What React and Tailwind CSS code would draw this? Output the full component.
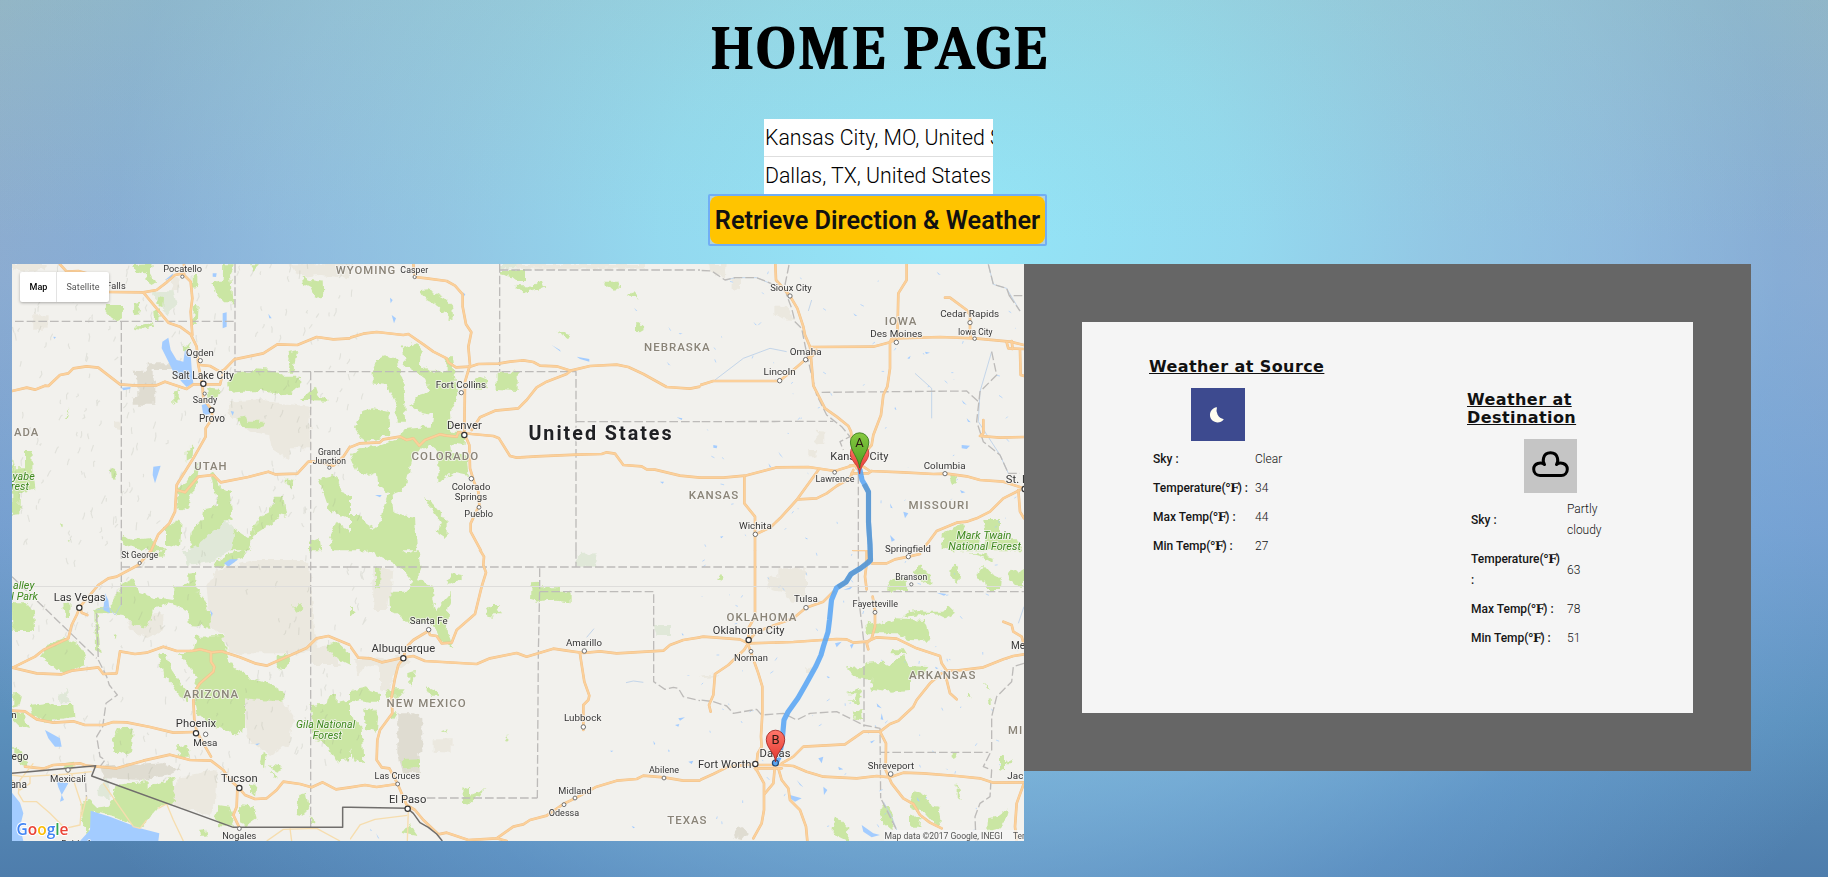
import React from "react";

// Each tile lists its features on a 3x grid that starts at (ox, oy) on the page.
const TILES = [
  {
    ox: 0, oy: 255,
    beige: ["97 178 143 178 143 224 97 224", "685 440 790 432 810 440 932 455 932 580 870 580 868 612 820 590 810 540 750 530 690 480", "870 28 1050 28 1050 70 960 60 910 65 885 50", "345 500 362 500 362 525 345 522", "512 70 535 70 540 110 515 105", "36 27 140 27 140 42 80 50 36 45"],
    tan: ["400 347 443 347 443 325 515 325 515 345 458 345 458 375 466 375 466 449 398 449 398 428 412 425 412 375"],
    pale: ["565 899 580 865 680 795 700 820 705 845 690 899", "450 110 520 105 530 150 500 180 480 150"],
    green: ["400 30 455 28 452 50 468 80 455 90 440 80 437 55 405 48", "318 150 368 150 369 190 352 199 335 188 317 170", "400 150 422 146 415 175 398 178", "402 212 455 205 460 215 420 224 403 222", "460 165 480 160 478 195 462 195", "478 125 492 130 490 155 475 150", "578 65 592 60 592 95 578 98", "583 145 593 150 590 210 578 210", "670 28 705 28 690 60 698 145 672 145 650 120 640 82 668 75", "905 65 930 75 968 80 970 122 945 125 935 100 908 85", "750 28 780 28 762 45", "685 375 695 355 720 350 750 350 770 340 830 347 850 365 900 365 902 395 860 420 780 408 700 412 685 400", "868 290 892 285 885 320 880 350 865 350 872 310", "900 435 945 395 955 425 988 430 985 437 905 435", "520 410 537 405 535 450 520 440", "620 400 660 405 655 430 630 425", "548 270 575 268 570 290 550 285", "712 490 735 485 740 500 795 500 790 518 720 515", "192 488 208 458 200 490", "75 585 98 585 97 655 103 700 60 715 58 778 37 780 37 600 45 640 75 640", "332 640 345 645 350 672 335 665", "560 590 580 567 578 610 560 620", "595 620 560 680 530 700 540 770 565 760 570 720 590 700 595 650", "630 655 650 660 660 700 690 715 695 760 698 800 680 795 600 865 570 880 575 830 605 795 610 760 655 750 640 690", "700 820 745 850 775 790 760 840 745 899 690 899 705 845", "805 775 825 725 850 725 860 785 835 780 825 800 760 840 775 790", "495 820 530 800 545 800 540 880 495 870", "365 842 400 855 440 850 490 880 495 899 370 870", "860 670 880 675 875 700 860 690", "955 670 1000 660 1025 685 1020 710 1050 720 1050 790 990 770", "990 850 1010 800 1050 830 1050 899 1000 899", "930 860 960 850 965 899 930 899", "175 805 188 808 188 820", "200 860 212 850 210 865"],
    water: ["487 260 505 248 512 285 530 315 550 320 555 285 572 300 575 340 580 385 560 396 545 380 520 350 500 310 485 280", "605 450 625 445 630 478 610 480", "668 175 680 172 680 215 668 220", "460 635 482 632 465 685 458 660", "365 398 392 396 390 402 370 406", "638 55 650 55 648 66 638 65", "692 468 702 470 698 482", "495 75 520 55 515 68", "805 176 815 190 808 190", "160 245 168 246 163 252"],
    roads: ["36 408 80 398 105 404 135 392 145 393 180 360 205 355 220 340 260 334 295 338 360 388 400 391 470 391 495 380 560 402 580 388 660 388", "180 28 200 50 235 48 260 55", "325 111 430 112 470 105 500 82 525 60 548 55", "552 28 552 60 572 80 577 130 572 170 577 240", "430 112 505 203 540 215 572 238 590 275 595 330 607 390 610 430 635 465 637 490 617 520 617 545 600 575 580 610 530 690 525 770 508 805 475 838 450 895", "530 705 555 712 595 665 640 660 662 682 745 666 805 650 825 658 892 656 925 620 960 620", "960 622 1000 632 1030 605 1050 575", "600 330 630 333 660 350 672 345 703 313 790 295 832 268 892 270 950 246 1000 253 1050 250", "660 388 672 345"],
    borders: ["45 199 705 199", "705 27 705 350 1050 350", "364 199 364 900", "932 350 932 900"],
    dots: [[547, 65, 1], [601, 317, 2], [610, 386, 3], [614, 416, 1], [635, 466, 2.6], [988, 638, 1]],
  },
  {
    ox: 350, oy: 255,
    beige: ["500 27 885 27 885 41 500 41"],
    tan: [], pale: ["450 27 500 27 500 40 450 40"],
    green: ["450 45 525 45 525 78 495 78 480 65 450 58", "495 92 550 95 575 75 582 95 560 105 515 115", "763 80 808 80 810 95 795 104 765 92", "827 120 850 112 868 130 840 128", "622 230 662 240 655 252", "852 205 870 205 886 222 870 232 852 230", "440 350 503 350 503 408 440 405", "212 105 235 103 285 130 310 155 312 190 300 195 265 155 225 128", "365 375 390 365 415 375 413 403 370 400", "158 275 200 262 215 285 213 330 240 350 290 350 290 330 280 315 305 305 308 325 325 420 315 445 300 470 303 530 345 530 340 570 300 565 303 590 350 600 355 660 310 650 265 680 265 590 240 570 190 600 170 680 150 710 125 720 130 770 160 780 195 785 200 870 195 900 0 900 0 780 30 780 40 800 70 820 95 800 100 760 115 715 85 690 80 650 55 660 20 650 0 600 30 580 80 575 150 550 160 520 205 515 245 515 250 480 215 475 180 450 210 420 240 410 225 370 190 345 165 330", "65 355 85 310 110 302 145 320 150 350 160 365 165 500 140 500 140 450 120 410 110 390 65 385", "35 470 70 460 115 470 118 540 40 560 15 520", "225 730 240 735 290 800 290 850 260 830 270 800"],
    water: ["120 128 128 135 122 145", "125 180 138 190 132 205", "680 305 718 312 718 320 690 312", "605 270 630 285 632 290", "980 487 997 490 995 495", "75 720 95 720 90 727", "930 680 942 680 938 686", "950 320 962 332 955 328", "852 158 862 168 858 167", "955 215 964 228 960 226", "986 234 998 236 990 238", "338 112 346 118 342 124"],
    roads: ["190 28 195 66 230 70 290 78 315 92 338 118 338 155 348 208 364 232 355 275 360 330 345 380 343 530", "0 248 40 236 80 231 160 240 175 237 220 268 250 290 290 310 295 322 318 337 360 335 385 327 445 326 480 320 520 316 550 321 570 332 620 334 662 347 720 333 800 329 835 336 880 357 950 396 1020 401 1050 395", "662 347 650 357 590 380 560 397 530 435 505 460 435 467 390 487 365 525", "0 577 30 565 90 562 100 553 150 545 170 555 190 550 208 572 225 555 270 538 290 542 320 545 325 532 365 537 430 543 447 550 480 603 500 608 560 604 680 599 755 597 770 592 795 596 820 630 875 634 890 643 915 644 990 662 1050 668", "345 540 358 570 360 640 372 680 385 710 388 750 362 805 362 830 400 900"],
    borders: ["449 27 449 350", "449 45 1050 45", "0 350 678 350 678 900", "678 500 1050 500"],
    dots: [[194, 66, 1], [334, 413, 2], [343, 540, 3], [364, 671, 2.2], [387, 757, 1.5]],
  },
  {
    ox: 690, oy: 255,
    beige: ["55 27 107 27 105 65 85 62 60 45", "125 70 150 70 150 105 125 103", "253 155 290 155 315 195 285 193 253 175", "380 527 403 530 403 568 380 568", "355 585 377 585 377 607 355 607"],
    tan: [], pale: [],
    green: ["778 660 800 668 797 680 785 688", "755 860 760 835 790 820 820 805 825 830 870 850 865 880 880 900 790 900 780 880 755 880", "883 795 930 795 930 830 955 850 980 850 995 880 990 900 870 900 890 840"],
    water: ["70 570 82 572 80 580 70 578", "815 570 840 572 830 582 815 580", "600 745 608 760 602 758", "640 770 655 775 645 790", "600 840 615 855 605 860", "265 590 280 610 270 600", "705 290 720 293 708 297", "652 310 662 302 658 312", "740 50 752 60 745 58", "235 625 243 635 240 638", "490 175 502 183 495 182", "190 200 202 212 195 208", "815 435 830 450 820 445", "830 490 842 502 834 500", "810 705 826 712 815 715", "345 847 355 853 348 852", "615 455 620 465 614 462", "90 845 100 843 95 850"],
    roads: ["256 28 258 75 300 123 322 160 340 215 345 240 360 275 365 330 370 392 405 460 440 485 475 513 483 530 490 600 500 640", "360 276 550 275 600 262 620 250 750 246 855 250 960 260 1002 270", "650 28 650 75 625 115 622 250 605 250 600 262 600 340 592 395 580 420 573 480 550 540 545 570 510 610", "0 400 70 378 268 378 310 345 345 315 370 300 380 285", "765 128 780 128 830 165 840 180 840 225 842 248", "0 668 100 668 165 662 260 637 355 636 435 648 500 628", "163 665 163 745 195 785 195 900", "385 645 320 735 270 790 240 818 197 838", "325 733 380 730 410 715 440 693 480 670 490 645", "480 632 520 635 540 648 640 652 730 657 770 656 830 664 870 675 940 680 1002 700", "545 648 535 655 485 655", "990 705 940 730 900 770 860 790 830 800 800 803 740 828 715 862 690 890 650 900", "880 495 880 535 870 543 930 548 1002 546", "950 262 955 280 1002 282", "965 258 968 282", "990 285 992 360 1002 363", "985 705 990 770 1002 790"],
    borders: ["0 45 65 48 105 75 135 68 200 68 255 90", "297 30 285 90 290 120 305 160 315 200 335 220 345 270 360 340 380 420 410 480 455 515 480 545 450 560 460 585", "395 412 830 408 865 440", "0 500 430 499", "505 660 505 900", "895 28 910 88 950 100 958 122 1002 122", "958 122 990 168", "905 290 920 360 870 410 860 500 880 560 930 600 955 655 990 655"],
    rivers: ["895 28 910 88 950 100 990 168", "110 75 135 68 200 68 240 85", "905 290 870 410 865 500 930 600 955 655", "675 355 725 400 725 490", "75 375 160 310 240 280 290 290", "365 135 355 168"],
    dots: [[300, 123, 2], [347, 314, 2.2], [269, 377, 2.2], [619, 262, 2.2], [840, 203, 2], [854, 251, 1.3], [434, 652, 1.5], [765, 656, 2], [196, 838, 2.2], [1004, 702, 3]],
  },
  {
    ox: 0, oy: 550,
    beige: ["620 110 650 60 760 30 910 30 932 50 932 100 950 290 900 310 685 310 670 258 630 230", "735 435 850 455 880 500 870 580 810 615 740 570 735 500", "540 680 650 660 645 760 630 800 520 765 515 720", "370 190 490 190 490 240 440 265 395 240", "930 290 1000 290 1020 345 935 345"],
    tan: ["300 650 490 640 540 660 510 675 430 690 310 685"],
    pale: ["175 440 200 415 210 460 180 460", "550 0 690 0 640 35 560 45", "290 720 320 680 330 745 290 740"],
    green: ["36 160 80 160 103 190 105 243 37 243", "365 105 400 85 415 125 460 140 520 150 520 110 565 100 565 68 588 65 590 120 615 150 630 200 628 230 570 225 565 180 510 160 460 175 445 230 400 225 370 195 330 190 290 190 302 310 285 300 283 180 330 170", "120 320 150 282 190 265 240 285 260 345 180 370 160 350", "478 315 500 315 515 360 570 440 565 455 540 440 515 400 490 375", "540 310 580 300 590 260 670 258 680 320 700 350 750 385 815 402 850 425 850 455 780 450 735 445 735 535 710 555 625 520 590 490 580 440 590 380", "340 565 355 535 397 533 397 605 380 615 343 605", "90 465 150 458 165 465 220 465 223 500 130 515 95 490", "40 425 65 435 60 465 40 470", "40 485 70 490 90 540 60 530 40 510", "830 320 868 312 870 340 850 360 830 350", "876 170 905 160 910 175 893 188", "935 465 980 460 985 435 1010 435 1010 460 1050 450 1050 630 1005 635 985 590 955 575 935 545", "640 40 690 10 745 0 730 20 680 45 645 55", "980 285 1010 275 1050 310 1050 345 1000 320", "525 590 560 585 570 620 540 620", "655 765 690 770 705 830 655 825 645 800", "720 765 760 770 770 805 740 825 720 815", "785 605 800 615 795 655 780 640", "800 645 850 655 835 665", "810 660 835 680 825 688", "895 735 918 728 925 770 910 800 890 795", "750 700 770 705 765 740 750 725", "240 755 270 750 295 775 330 770 350 705 440 690 440 715 520 680 525 755 475 770 440 815 420 835 340 800 280 785 265 860 250 820", "340 255 350 252 348 268", "598 840 615 838 620 860 600 860", "190 165 212 160 210 200 195 205", "480 5 495 0 490 20 460 20", "930 800 940 800 943 822 930 822", "40 590 65 600 85 650 60 640 40 620", "190 640 222 635 220 655 195 655"],
    water: ["36 728 60 758 70 790 60 830 70 873 36 873", "272 782 330 800 420 835 478 850 475 873 240 873 270 840", "135 540 180 565 185 590 165 590 145 565", "170 692 205 700 185 735 180 755 192 750 175 712", "672 40 690 28 715 28 685 50", "630 180 638 190 635 200", "765 582 780 580 772 586", "315 130 325 150 330 190 310 180"],
    roads: ["455 0 415 45 350 80 325 85 295 105 270 135 240 170 230 195 215 225 205 265 130 300 105 320 40 352", "240 170 245 188 262 195", "36 353 110 370 185 373 215 362 295 352 310 372 350 370 360 304 405 312 440 308 490 290 530 303 575 303 600 298 635 307 665 304 720 322 765 340 800 347 920 294 950 265 985 258 1050 285", "633 308 633 335 643 350 640 365 600 400 587 420 580 450 583 510 590 545 610 580 633 620", "36 482 75 484 110 508 160 518 220 514 255 525 310 525 340 516 380 517 450 531 520 548 585 546", "75 650 130 656 160 645 240 640 260 647 350 655 430 632 510 614 570 630 633 632 670 660 690 690 718 715 735 735 765 747 800 745 830 720 850 695 900 702 935 712 968 697 1008 718 1050 712", "712 720 710 770 700 795 718 833"],
    thin: ["36 675 70 680 210 672 275 665", "100 640 60 690 55 730 70 755 110 755 150 790 195 835 240 825 245 765 230 720 215 672", "200 672 230 640", "475 775 500 762 520 810 550 873", "36 690 60 720 90 700 90 680", "800 873 850 838 950 835 1020 873", "870 835 875 873", "260 740 245 800", "440 810 420 835 400 830 310 700"],
    borders: ["364 0 364 165", "364 51 1050 51", "932 0 932 832", "36 80 290 325", "290 190 295 330 320 380 328 405 352 435 318 460 308 530 290 560 300 620 315 630 300 650", "255 665 260 750"],
    country: ["36 670 287 647 275 678 700 832 1028 832 1028 772 1050 772"],
    rivers: ["290 180 325 170 345 195 362 165"],
    dots: [[419, 39, 1], [238, 173, 3], [588, 550, 3], [617, 553, 2.2], [718, 714, 3], [204, 660, 2.2], [718, 836, 1.5]],
  },
  {
    ox: 350, oy: 550,
    beige: ["70 50 130 60 125 120 145 140 115 145 110 180 70 180", "40 320 110 330 160 315 180 330 140 360 110 430 90 420 90 350 50 345 25 380 15 330", "248 568 305 568 305 608 248 605"],
    tan: ["142 490 195 490 217 505 217 605 205 610 210 670 160 670 142 610"],
    pale: ["680 12 740 10 735 50 680 50", "910 225 960 225 960 255 920 255"],
    green: ["50 0 155 0 170 10 205 0 215 50 200 90 250 105 250 150 260 190 250 215 170 215 140 190 120 185 118 125 175 125 190 95 160 60 110 30", "75 50 92 55 90 118 75 115", "290 95 310 70 335 75 335 90 290 105", "265 170 305 125 305 150 295 180 290 240 300 265 310 295 270 270 255 230 240 225", "410 180 425 165 450 165 440 180 455 190 430 190 430 203 412 200", "178 365 195 360 185 410 178 400", "105 418 167 418 150 440 110 440", "228 412 260 420 270 440 245 440", "0 420 40 412 90 430 90 455 60 455 30 450 0 460", "40 480 70 475 85 500 80 545 45 535", "0 500 35 530 40 640 10 630 0 600", "545 100 567 98 570 112 630 112 630 125 662 125 662 157 590 150 560 155 543 150", "158 630 210 628 210 650 160 655", "340 712 357 718 362 735 410 716 380 740 350 765 342 755", "160 835 180 825 203 858 155 850", "275 543 290 538 285 548", "462 570 472 555 472 573", "120 490 140 490 128 510", "0 170 18 190 0 195"],
    water: ["985 505 1005 502 990 512", "1015 635 1030 632 1025 642", "845 828 855 832 850 835", "780 602 790 602 785 606", "975 525 988 522 985 530", "910 572 916 582 912 584", "955 598 960 604 955 605", "1010 375 1020 378 1015 378", "78 850 88 866 84 864", "60 836 66 842 62 842", "995 248 1002 256 997 256"],
    roads: ["390 0 402 20 400 45 408 68 395 110 375 192 320 240 305 278 275 280 260 258 240 255 235 243 190 270 170 290 160 323", "0 288 25 323 60 325 95 337 160 323 190 318 225 333 380 342 420 325 500 309 530 320 565 310 610 296 650 302 700 309 750 304 800 310 940 302 960 285 1000 270 1050 262", "690 310 692 325 703 395 718 437 715 450 700 465 700 540", "160 325 145 345 135 385 125 440 127 490 90 540 82 570 80 630 95 652 118 655 142 700 170 765 195 780 220 810 265 853 290 848 355 870 440 865 490 830 520 823 540 810 590 797 640 762 675 745 740 710 800 692 860 687 880 677 942 682 1000 692 1050 692", "0 712 45 705 80 711 142 702", "440 865 470 873"],
    thin: ["0 868 30 825 75 808 172 796", "175 780 172 873"],
    borders: ["0 51 1050 51", "678 0 678 51", "569 55 569 115 565 310 562 744", "230 744 562 744", "569 125 911 125 911 395 945 418 970 412 985 415 1000 440 1050 452"],
    country: ["0 772 172 775 190 790 210 818 235 832 260 852 277 873"],
    dots: [[236, 239, 2.2], [160, 325, 3], [703, 303, 2.2], [700, 531, 2.2], [143, 702, 1.6], [173, 776, 3], [942, 684, 1.6], [675, 744, 1.6], [642, 764, 1.6]],
    rivers: ["828 398 850 393 880 397", "710 262 732 236"],
  },
  {
    ox: 690, oy: 550,
    beige: ["233 80 265 80 265 55 348 55 348 155 305 155 285 130 233 112", "345 355 375 355 370 368 345 365", "35 380 80 372 85 382 35 384"],
    tan: ["130 850 150 825 165 835 170 850 155 867 135 862"], pale: [],
    green: ["85 85 95 72 98 90 90 95", "585 125 605 90 650 85 652 125", "670 65 690 40 705 70 725 75 720 105 680 85", "780 88 782 60 795 42 808 62 805 95", "860 75 880 45 902 70 932 85 930 120 890 120 885 95 860 88", "955 65 975 60 985 70 1002 60 1002 108 975 105 960 90", "530 215 560 225 620 205 705 210 720 260 715 272 660 270 620 250 530 250", "605 298 640 298 648 312 605 313", "468 355 525 350 530 338 580 335 600 345 640 315 655 345 715 348 700 370 660 385 660 420 600 425 540 415 550 390 500 385", "640 195 680 180 700 185 760 185 770 165 795 190 770 205 740 190 690 195 645 200", "470 430 505 415 515 440 500 460 472 452 495 450 500 430", "485 485 515 480 520 510 490 505", "570 785 580 755 605 790 608 840 575 815", "425 835 432 800 450 808 475 835 472 873 425 850", "660 755 672 720 700 730 720 765 745 770 755 830 730 820 700 785 665 775", "785 610 800 612 795 630 785 625", "930 620 945 615 945 665 930 660", "890 850 895 805 920 800 955 775 945 810 930 835 900 842", "800 700 815 750 800 740", "940 640 970 625 965 640", "895 450 905 440 905 465 895 465", "835 425 845 445 832 440", "885 395 905 420 890 415", "660 800 695 798 690 830 660 830", "840 10 870 10 905 20 905 35 880 22"],
    water: ["515 825 550 850 570 855 545 862 520 845", "400 710 412 720 402 735", "320 690 340 712 330 705", "385 625 400 620 395 640", "540 575 555 570 545 580", "435 280 455 275 440 292", "480 285 492 280 485 296", "575 490 580 510 572 508", "445 650 460 658 447 660", "740 128 770 132 762 137", "560 460 575 475 562 470", "300 735 335 745 315 755 300 745", "410 378 420 382 414 385", "680 740 690 755 683 752", "735 350 745 355 738 357", "460 120 490 108 480 118"],
    roads: ["195 0 195 200 175 235 175 280 162 300 115 345 75 372 70 435 57 465 62 485", "0 267 40 260 150 268 175 280 310 276 440 267 470 268 490 278 530 275 560 262 620 266 680 295 750 318 755 340 770 362 800 362 880 352 940 328 970 318 1002 313", "430 125 400 155 348 173 310 205 200 245 178 270", "175 285 205 370 217 410 217 490 213 560 215 590 203 610 198 660", "490 0 530 0 530 40 525 80 530 118", "545 40 590 40 615 28 655 20 690 12", "548 140 555 180 555 230 545 265 530 280 535 298", "755 370 720 400 680 450 670 470 625 512 600 522 570 545 520 545 465 583 340 590 310 620 275 640", "765 370 780 430 800 448", "570 545 588 580 587 660 605 700 640 745 670 762 690 795 720 818 755 835", "0 692 30 690 70 672 115 650 195 642", "197 645 275 645 310 648 350 665 400 680 500 685 560 678 600 682 640 668 700 670 800 678 870 685 910 698 1002 697", "275 655 195 655", "200 660 222 700 222 780 215 820 190 865", "255 645 250 700 225 730", "265 655 275 690 295 715 300 750 330 780 348 830 352 873", "940 215 965 225 970 245 995 260 1002 285", "1000 705 980 760 975 830 980 873"],
    borders: ["0 51 475 51", "505 0 505 135 522 280 522 530", "505 125 1002 125", "0 447 30 450 70 455 110 468 130 490 200 478 215 495 280 490 320 510 360 490 440 485 520 525 570 535 572 745", "572 607 895 607", "1002 340 970 350 965 395 920 440 905 500 905 600 880 650 905 660 900 740 870 760 855 800 858 873", "575 750 600 800 620 840"],
    rivers: ["580 755 605 800 620 840", "1002 170 985 220"],
    dots: [[655, 20, 2], [664, 103, 1], [348, 173, 2.2], [555, 187, 1.6], [176, 270, 3], [183, 304, 1.6], [196, 642, 3], [602, 672, 2.4]],
  },
];

// [tile, x, baseline y, text, size, kind]; x is the middle of the text
const LABELS = [
  [0, 548, 52, "Pocatello", 9.2, "c"], [0, 348, 102, "Falls", 9.2, "c"],
  [0, 600, 303, "Ogden", 9.5, "c"], [0, 609, 371, "Salt Lake City", 10.2, "c"], [0, 615, 444, "Sandy", 8.9, "c"], [0, 636, 500, "Provo", 10, "c"],
  [0, 988, 600, "Grand", 8.5, "c"], [0, 988, 627, "Junction", 8.5, "c"],
  [0, 80, 544, "ADA", 11.3, "s"], [0, 633, 646, "UTAH", 11.3, "s"], [1, 48, 57, "WYOMING", 11.3, "s"],
  [0, 71, 674, "yabe", 10.8, "p"], [0, 60, 705, "rest", 10.8, "p"],
  [1, 193, 54, "Casper", 8.8, "c"], [1, 333, 398, "Fort Collins", 9.8, "c"], [1, 343, 522, "Denver", 11.2, "c"],
  [1, 286, 615, "COLORADO", 11.5, "s"], [1, 363, 705, "Colorado", 9.5, "c"], [1, 363, 734, "Springs", 9.5, "c"], [1, 386, 787, "Pueblo", 9.2, "c"],
  [1, 753, 554, "United States", 19.7, "n"],
  [2, -38, 288, "NEBRASKA", 11.5, "s"], [2, 303, 108, "Sioux City", 9.4, "c"], [2, 347, 299, "Omaha", 9.9, "c"], [2, 269, 361, "Lincoln", 9.9, "c"],
  [2, 633, 211, "IOWA", 11.5, "s"], [2, 619, 245, "Des Moines", 9.9, "c"], [2, 839, 186, "Cedar Rapids", 9.9, "c"], [2, 856, 240, "Iowa City", 8.4, "c"],
  [2, 508, 616, "Kansas City", 11, "c"], [2, 435, 682, "Lawrence", 9, "c"], [2, 764, 641, "Columbia", 9.8, "c"], [2, 981, 684, "St. L", 11.2, "c"],
  [2, 72, 732, "KANSAS", 11.5, "s"], [2, 747, 762, "MISSOURI", 11.5, "s"], [2, 196, 823, "Wichita", 9.8, "c"],
  [2, 882, 853, "Mark Twain", 10.9, "p"], [2, 884, 884, "National Forest", 10.9, "p"], [2, 654, 890, "Springfield", 9.5, "c"],
  [3, 419, 25, "St George", 8.4, "c"], [3, 239, 154, "Las Vegas", 11.2, "c"], [3, 71, 117, "alley", 10.8, "p"], [3, 74, 151, "l Park", 10.8, "p"],
  [3, 634, 445, "ARIZONA", 11.5, "s"], [3, 588, 531, "Phoenix", 11.2, "c"], [3, 616, 587, "Mesa", 9.8, "c"], [3, 977, 534, "Gila National", 10.6, "p"], [3, 982, 566, "Forest", 10.6, "p"],
  [3, 718, 696, "Tucson", 11.2, "c"], [3, 718, 868, "Nogales", 9.2, "c"], [3, 204, 695, "Mexicali", 9.6, "c"], [3, 60, 630, "ego", 10, "c"], [3, 56, 713, "ana", 10, "c"], [3, 42, 503, "n", 9.6, "c"], [3, 230, 892, "Bahía A", 9, "c"],
  [4, 236, 222, "Santa Fe", 9.7, "c"], [4, 160, 306, "Albuquerque", 11.2, "c"], [4, 230, 472, "NEW MEXICO", 11.5, "s"], [4, 142, 686, "Las Cruces", 9.1, "c"], [4, 173, 758, "El Paso", 11.2, "c"],
  [4, 702, 287, "Amarillo", 9.6, "c"], [4, 698, 514, "Lubbock", 9.8, "c"], [4, 942, 668, "Abilene", 9, "c"], [4, 675, 731, "Midland", 9.2, "c"], [4, 642, 797, "Odessa", 9, "c"],
  [5, -8, 821, "TEXAS", 11.5, "s"], [5, 348, 157, "Tulsa", 9.8, "c"], [5, 216, 212, "OKLAHOMA", 11.5, "s"], [5, 176, 251, "Oklahoma City", 11, "c"], [5, 183, 334, "Norman", 9.4, "c"],
  [5, 664, 91, "Branson", 8.6, "c"], [5, 556, 172, "Fayetteville", 9, "c"], [5, 758, 387, "ARKANSAS", 11.5, "s"], [5, 984, 298, "Me", 10, "c"], [5, 977, 552, "MI", 11.3, "s"],
  [5, 255, 620, "Dallas", 11.2, "c"], [5, 104, 653, "Fort Worth", 11.2, "c"], [5, 603, 656, "Shreveport", 9.5, "c"], [5, 976, 687, "Jac", 9.8, "c"],
];

const LABEL_STYLE = {
  c: { fill: "#363636", letterSpacing: 0.05 },
  s: { fill: "#8a8478", fontWeight: 500, letterSpacing: 1 },
  p: { fill: "#3f8a1f", fontStyle: "italic", letterSpacing: 0.05 },
  n: { fill: "#202124", fontWeight: 700, letterSpacing: 2 },
};

const line = (s) => "M" + s.replace(/(\S+) (\S+) ?/g, "$1,$2 ").trim();

function rng(seed) {
  let s = seed;
  return () => ((s = (s * 16807) % 2147483647) / 2147483647);
}

// short faint ridges over the mountain states
const RIDGES = (() => {
  const r = rng(77);
  const out = [];
  for (let i = 0; i < 420; i++) {
    const x = 14 + r() * 350;
    const y = 266 + r() * 520;
    out.push(`M${x.toFixed(1)},${y.toFixed(1)}l${((r() - 0.4) * 4).toFixed(1)},${(-1 - r() * 4).toFixed(1)}l${((r() - 0.3) * 3).toFixed(1)},${(-1 - r() * 3).toFixed(1)}`);
  }
  return out.join("");
})();

const SPECKS = (() => {
  const r = rng(901);
  const out = [];
  for (let i = 0; i < 150; i++) {
    const x = 700 + r() * 320;
    const y = 270 + r() * 565;
    out.push(`M${x.toFixed(1)},${y.toFixed(1)}l${((r() - 0.3) * 5).toFixed(1)},${((r() - 0.5) * 6).toFixed(1)}`);
  }
  return out.join("");
})();

function Layer({ name, children }) {
  return TILES.map((t, i) => (
    <g key={name + i} transform={`translate(${t.ox} ${t.oy}) scale(0.33333)`} clipPath={`url(#t${i})`}>
      {children(t)}
    </g>
  ));
}

function Polys({ list = [], fill }) {
  return list.map((p, i) => <polygon key={i} points={p} fill={fill} />);
}

function Lines({ list = [], ...rest }) {
  return list.map((p, i) => <path key={i} d={line(p)} fill="none" strokeLinejoin="round" {...rest} />);
}

function Marker({ x, y, tip, fill, edge, letter }) {
  return (
    <g>
      <path d={`M${x},${tip}C${x - 0.8},${tip - 10} ${x - 9.2},${y + 9} ${x - 9.2},${y}a9.2,9.2 0 0 1 18.4,0C${x + 9.2},${y + 9} ${x + 0.8},${tip - 10} ${x},${tip}Z`} fill={fill} stroke={edge} strokeWidth="0.9" />
      {letter && <text x={x} y={y + 4.6} textAnchor="middle" fontSize="13" fill="#2b1a12">{letter}</text>}
    </g>
  );
}

const ROUTE = "M860,470L862,480L865,485L868.5,492L868.5,522L870,545L870.5,560L868,563L861,568L851,574L846,582L836.5,588L831.5,600L829.5,620L828,632L823.5,646L821,655L816,666L806,684L798,698L788,712L784,720L782,742L779,757L776,763";

function MapView() {
  return (
    <svg className="block h-[577px] w-[1012px]" viewBox="12 264 1012 577" fontFamily="Roboto, 'Liberation Sans', sans-serif">
      <defs>
        <filter id="rough" x="-5%" y="-5%" width="110%" height="110%">
          <feTurbulence type="fractalNoise" baseFrequency="0.16" numOctaves="2" seed="4" result="n" />
          <feDisplacementMap in="SourceGraphic" in2="n" scale="7" xChannelSelector="R" yChannelSelector="G" />
        </filter>
        {TILES.map((t, i) => (
          <clipPath key={i} id={`t${i}`}>
            <rect x={t.ox === 690 ? 30 : 0} y="0" width="1051" height={t.oy === 255 ? 886 : 900} />
          </clipPath>
        ))}
        <linearGradient id="green" x1="0" y1="0" x2="0" y2="1">
          <stop offset="0" stopColor="#86c940" /><stop offset="1" stopColor="#4f9f22" />
        </linearGradient>
        <linearGradient id="red" x1="0" y1="0" x2="0" y2="1">
          <stop offset="0" stopColor="#ff776b" /><stop offset="1" stopColor="#e2362e" />
        </linearGradient>
      </defs>
      <rect x="12" y="264" width="1012" height="577" fill="#f2f1ed" />
      <g filter="url(#rough)">
        <Layer name="land">{(t) => (<><Polys list={t.beige} fill="#ebe8df" /><Polys list={t.tan} fill="#dfdcd1" /><Polys list={t.pale} fill="#e0e8d8" /><Polys list={t.green} fill="#cae6a3" /></>)}</Layer>
      </g>
      <path d={RIDGES} fill="none" stroke="#8f9384" strokeOpacity="0.17" strokeWidth="1.1" />
      <path d={SPECKS} fill="none" stroke="#a3ccff" strokeOpacity="0.75" strokeWidth="0.9" />
      <Layer name="water">{(t) => (<><Polys list={t.water} fill="#a3ccff" /><Lines list={t.rivers} stroke="#b9cfe8" strokeWidth="2.5" /></>)}</Layer>
      <Layer name="borders">{(t) => <Lines list={t.borders} stroke="#bdbbb9" strokeWidth="4" strokeDasharray="26 9" />}</Layer>
      <Layer name="casing">{(t) => <Lines list={t.roads} stroke="#eec08a" strokeWidth="8" strokeLinecap="round" />}</Layer>
      <Layer name="roads">{(t) => (<><Lines list={t.thin} stroke="#f6ddae" strokeWidth="4" /><Lines list={t.roads} stroke="#fcd09a" strokeWidth="5.6" strokeLinecap="round" /></>)}</Layer>
      <Layer name="country">{(t) => <Lines list={t.country} stroke="#706e6c" strokeWidth="4.5" />}</Layer>
      <path d="M12,586.5H1024" stroke="#dedddb" strokeWidth="1" />
      <path d={ROUTE} fill="none" stroke="#55a3f5" strokeOpacity="0.85" strokeWidth="5.2" strokeLinejoin="round" strokeLinecap="round" />
      <path d="M864,484L868.5,492L868.5,522L870,545L870.5,560L861,568L851,574L846,582L838,587" fill="none" stroke="#5b94c8" strokeOpacity="0.7" strokeWidth="5" />
      <Layer name="dots">
        {(t) => t.dots.map(([x, y, s], i) => (
          <circle key={i} cx={x} cy={y} r={3.4 + s * 1.5} fill="#fff" stroke={s > 2.5 ? "#333" : "#666"} strokeWidth={s > 2.5 ? 3.6 : 2.8} />
        ))}
      </Layer>
      {LABELS.map(([t, x, y, text, size, kind], i) => (
        <text key={i} x={TILES[t].ox + x / 3} y={TILES[t].oy + y / 3} fontSize={size} textAnchor="middle" stroke="#f5f4f1" strokeWidth={kind === "n" ? 3 : 2} strokeOpacity="0.8" strokeLinejoin="round" paintOrder="stroke" {...LABEL_STYLE[kind]}>
          {text}
        </text>
      ))}
      <Marker x={859.6} y={453} tip={474} fill="url(#red)" edge="#c4413a" />
      <Marker x={859.6} y={442} tip={468} fill="url(#green)" edge="#3b7d1c" letter="A" />
      <circle cx="775.4" cy="763" r="3" fill="#5ba4ee" stroke="#234a75" strokeWidth="1.2" />
      <Marker x={775.5} y={739.4} tip={762} fill="url(#red)" edge="#a52b25" letter="B" />

      <rect x="884" y="830" width="140" height="11" fill="#f5f5f5" fillOpacity="0.75" />
      <text x="884.5" y="839" fontSize="8.6" fill="#555" textLength="118">Map data ©2017 Google, INEGI</text>
      <text x="1013" y="839" fontSize="8.4" fill="#555">Ter</text>
      <g fontFamily="'Open Sans', 'Noto Sans', sans-serif" fontSize="17" fontWeight="600" stroke="#fff" strokeWidth="2" paintOrder="stroke" strokeLinejoin="round">
        <text x="16.5" y="835" textLength="52" lengthAdjust="spacingAndGlyphs">
          <tspan fill="#4285f4">G</tspan><tspan fill="#ea4335">o</tspan><tspan fill="#fbbc05">o</tspan><tspan fill="#4285f4">g</tspan><tspan fill="#34a853">l</tspan><tspan fill="#ea4335">e</tspan>
        </text>
      </g>
    </svg>
  );
}

function MapControls() {
  return (
    <div className="absolute left-2 top-2 flex h-[30px] w-[89px] rounded-[2px] bg-white text-[9px] leading-[30px] shadow-[0_1px_3px_rgba(0,0,0,0.3)]">
      <button className="w-[37px] border-r border-[#e3e3e3] pl-px text-center font-medium text-black">Map</button>
      <button className="flex-1 text-center tracking-[0.1px] text-[#565656]">Satellite</button>
    </div>
  );
}

function Unit() {
  return <span className="font-['Liberation_Serif','DejaVu_Serif',serif] font-bold tracking-[-1.4px]">℉</span>;
}

function WeatherTable({ rows, labelWidth, valueWidth }) {
  return (
    <div className="text-[12px] leading-[21px] text-[#111]">
      {rows.map(([name, unit, value]) => (
        <div key={name} className="flex items-center py-1">
          <div className={`${labelWidth} font-medium text-[#151515]`}>
            {name}{unit && <>(<Unit />)</>} :
          </div>
          <div className={`${valueWidth} font-light`}>{value}</div>
        </div>
      ))}
    </div>
  );
}

export default function App() {
  return (
    <div className="h-[877px] w-[1828px] overflow-hidden bg-[linear-gradient(180deg,rgba(150,205,190,0.2)_0px,rgba(150,210,200,0)_240px),radial-gradient(ellipse_1040px_920px_at_950px_230px,rgba(148,230,248,1)_0%,rgba(148,222,243,0.9)_28%,rgba(147,210,238,0.7)_48%,rgba(142,200,238,0.55)_64%,rgba(120,178,230,0.38)_80%,rgba(100,155,215,0)_105%),linear-gradient(180deg,#97b0c2_0%,#90aacc_32%,#769dcd_60%,#5b90bc_82%,#4e7dac_100%)] pl-3 font-[Roboto,'Liberation_Sans',sans-serif]">
      <header className="flex h-[264px] w-[1733px] flex-col items-center">
        <h1 className="h-[119px] whitespace-nowrap pl-[2px] pt-[13px] font-[Cambria,Caladea,'Liberation_Serif',serif] text-[62px] font-bold leading-[72px] tracking-[1.4px] text-black">
          HOME PAGE
        </h1>
        <div className="h-[38px] w-[229px] overflow-hidden whitespace-nowrap border-b border-[#dedede] bg-white pl-px text-[21.3px] font-light leading-[38px] text-black">
          Kansas City, MO, United States
        </div>
        <div className="h-[37px] w-[229px] overflow-hidden whitespace-nowrap bg-white pl-px text-[21.3px] font-light leading-[37px] text-black">
          Dallas, TX, United States
        </div>
        <button className="h-[52px] w-[339px] -translate-x-px rounded-[2px] border-2 border-[#71aef5] bg-[#b5d3da]">
          <span className="block h-[48px] whitespace-nowrap rounded-[8px] bg-[#ffc400] text-center text-[25.3px] font-semibold leading-[49px] text-[#111]">
            Retrieve Direction &amp; Weather
          </span>
        </button>
      </header>
      <main className="flex items-start">
        <section className="relative h-[577px] w-[1012px] overflow-hidden">
          <MapView />
          <MapControls />
        </section>
        <section className="h-[507px] w-[727px] bg-[#666] p-[58px]">
          <div className="flex h-[391px] w-[611px] bg-[#f5f5f5] pl-[67px]">
            <div className="w-[318px] pt-[36px]">
              <h2 className="whitespace-nowrap font-['DejaVu_Sans',sans-serif] text-[16px] font-bold leading-[18px] tracking-[0.42px] text-[#111] underline">Weather at Source</h2>
              <svg className="ml-[42px] mt-[12px] block h-[53px] w-[54px] bg-[#3d4a8f]" viewBox="0 0 54 53">
                <path d="M26,19.3A7.6,7.6 0 1 0 32.8,31.2A9,9 0 0 1 26,19.3Z" fill="#fffdf0" />
              </svg>
              <div className="pl-1 pt-[4px]">
                <WeatherTable labelWidth="w-[102px]" valueWidth="w-[60px]" rows={[["Sky", false, "Clear"], ["Temperature", true, "34"], ["Max Temp", true, "44"], ["Min Temp", true, "27"]]} />
              </div>
            </div>
            <div className="w-[160px] pt-[69px]">
              <h2 className="font-['DejaVu_Sans',sans-serif] text-[16px] font-bold leading-[18px] tracking-[0.42px] text-[#111] underline">Weather at<br />Destination</h2>
              <svg className="ml-[57px] mt-[12px] block h-[54px] w-[53px] bg-[#c5c5c5]" viewBox="0 0 53 54">
                <path d="M20.5,25.5C18.6,23.2 18,13.8 26.5,13.8C35,13.8 34.4,23.2 32.5,25.5C36,22.7 43.3,24 43.3,30.2C43.3,34 40.6,36.5 37.3,36.5H16C12.5,36.5 9.7,34 9.7,30.2C9.7,24 17,22.7 20.5,25.5Z" fill="none" stroke="#000" strokeWidth="3" strokeLinejoin="round" />
              </svg>
              <div className="pl-1 pt-[2px]">
                <WeatherTable labelWidth="w-[96px] pr-2" valueWidth="w-[44px]" rows={[["Sky", false, "Partly cloudy"], ["Temperature", true, "63"], ["Max Temp", true, "78"], ["Min Temp", true, "51"]]} />
              </div>
            </div>
          </div>
        </section>
      </main>
    </div>
  );
}
